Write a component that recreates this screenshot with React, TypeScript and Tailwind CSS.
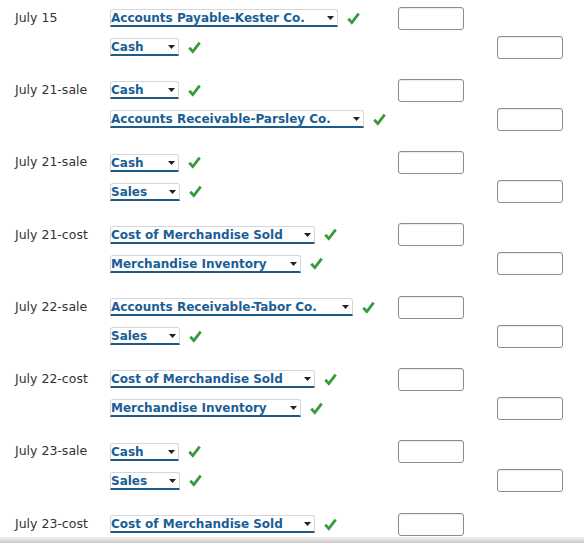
import React from 'react';

type Entry = {
    date: string;
    debit: { account: string; width: number };
    credit: { account: string; width: number };
};

const entries: Entry[] = [
    { date: 'July 15', debit: { account: 'Accounts Payable-Kester Co.', width: 228 }, credit: { account: 'Cash', width: 69 } },
    { date: 'July 21-sale', debit: { account: 'Cash', width: 69 }, credit: { account: 'Accounts Receivable-Parsley Co.', width: 254 } },
    { date: 'July 21-sale', debit: { account: 'Cash', width: 69 }, credit: { account: 'Sales', width: 70 } },
    { date: 'July 21-cost', debit: { account: 'Cost of Merchandise Sold', width: 205 }, credit: { account: 'Merchandise Inventory', width: 191 } },
    { date: 'July 22-sale', debit: { account: 'Accounts Receivable-Tabor Co.', width: 243 }, credit: { account: 'Sales', width: 70 } },
    { date: 'July 22-cost', debit: { account: 'Cost of Merchandise Sold', width: 205 }, credit: { account: 'Merchandise Inventory', width: 191 } },
    { date: 'July 23-sale', debit: { account: 'Cash', width: 69 }, credit: { account: 'Sales', width: 70 } },
    { date: 'July 23-cost', debit: { account: 'Cost of Merchandise Sold', width: 205 }, credit: { account: 'Merchandise Inventory', width: 191 } },
];

const Check = () => (
    <svg width="13" height="13" viewBox="0 0 13 13" className="ml-[9px] shrink-0">
        <path d="M1.3 6.8 L4.8 10.6 L11.7 1.6" fill="none" stroke="#3a9a3a" strokeWidth="2.8" strokeLinejoin="miter" />
    </svg>
);

// Account dropdown with the blue underline
const AccountSelect = ({ account, width }: { account: string; width: number }) => (
    <div className="flex items-center">
        <div
            className="flex h-[18px] items-end justify-between rounded-t-[3px] border border-b-2 border-[#d6d6d6] border-b-[#1d5b8a] bg-white pb-[1px]"
            style={{ width }}
        >
            <span className="text-[12px] font-bold leading-none text-[#1a5e96]">{account}</span>
            <svg width="7" height="4" viewBox="0 0 7 4" className="mb-[4px] mr-[3px]">
                <path d="M0 0 H7 L3.5 4 Z" fill="#222" />
            </svg>
        </div>
        <Check />
    </div>
);

const AmountInput = () => (
    <div className="h-[23px] w-[66px] rounded-[3px] border border-[#8c8c8c] bg-white shadow-[inset_0_1px_1px_rgba(0,0,0,0.08)]" />
);

export default function App() {
    return (
        <div className="relative h-[543px] w-[584px] overflow-hidden bg-white font-['DejaVu_Sans',Verdana,sans-serif]">
            <div className="flex flex-col gap-[14.3px] pt-[3.5px]">
                {entries.map((e, i) => (
                    <div key={i} className="flex flex-col">
                        <div className="grid h-[29px] grid-cols-[110px_288px_99px_1fr] items-center">
                            <span className="pl-[15px] text-[12.5px] text-[#333]">{e.date}</span>
                            <AccountSelect account={e.debit.account} width={e.debit.width} />
                            <AmountInput />
                            <div />
                        </div>
                        <div className="grid h-[29px] grid-cols-[110px_288px_99px_1fr] items-center">
                            <span />
                            <AccountSelect account={e.credit.account} width={e.credit.width} />
                            <div />
                            <AmountInput />
                        </div>
                    </div>
                ))}
            </div>
            <div className="absolute bottom-0 left-0 h-[6px] w-full bg-gradient-to-b from-[#f2f2f2] to-[#c9c9c9]" />
        </div>
    );
}
